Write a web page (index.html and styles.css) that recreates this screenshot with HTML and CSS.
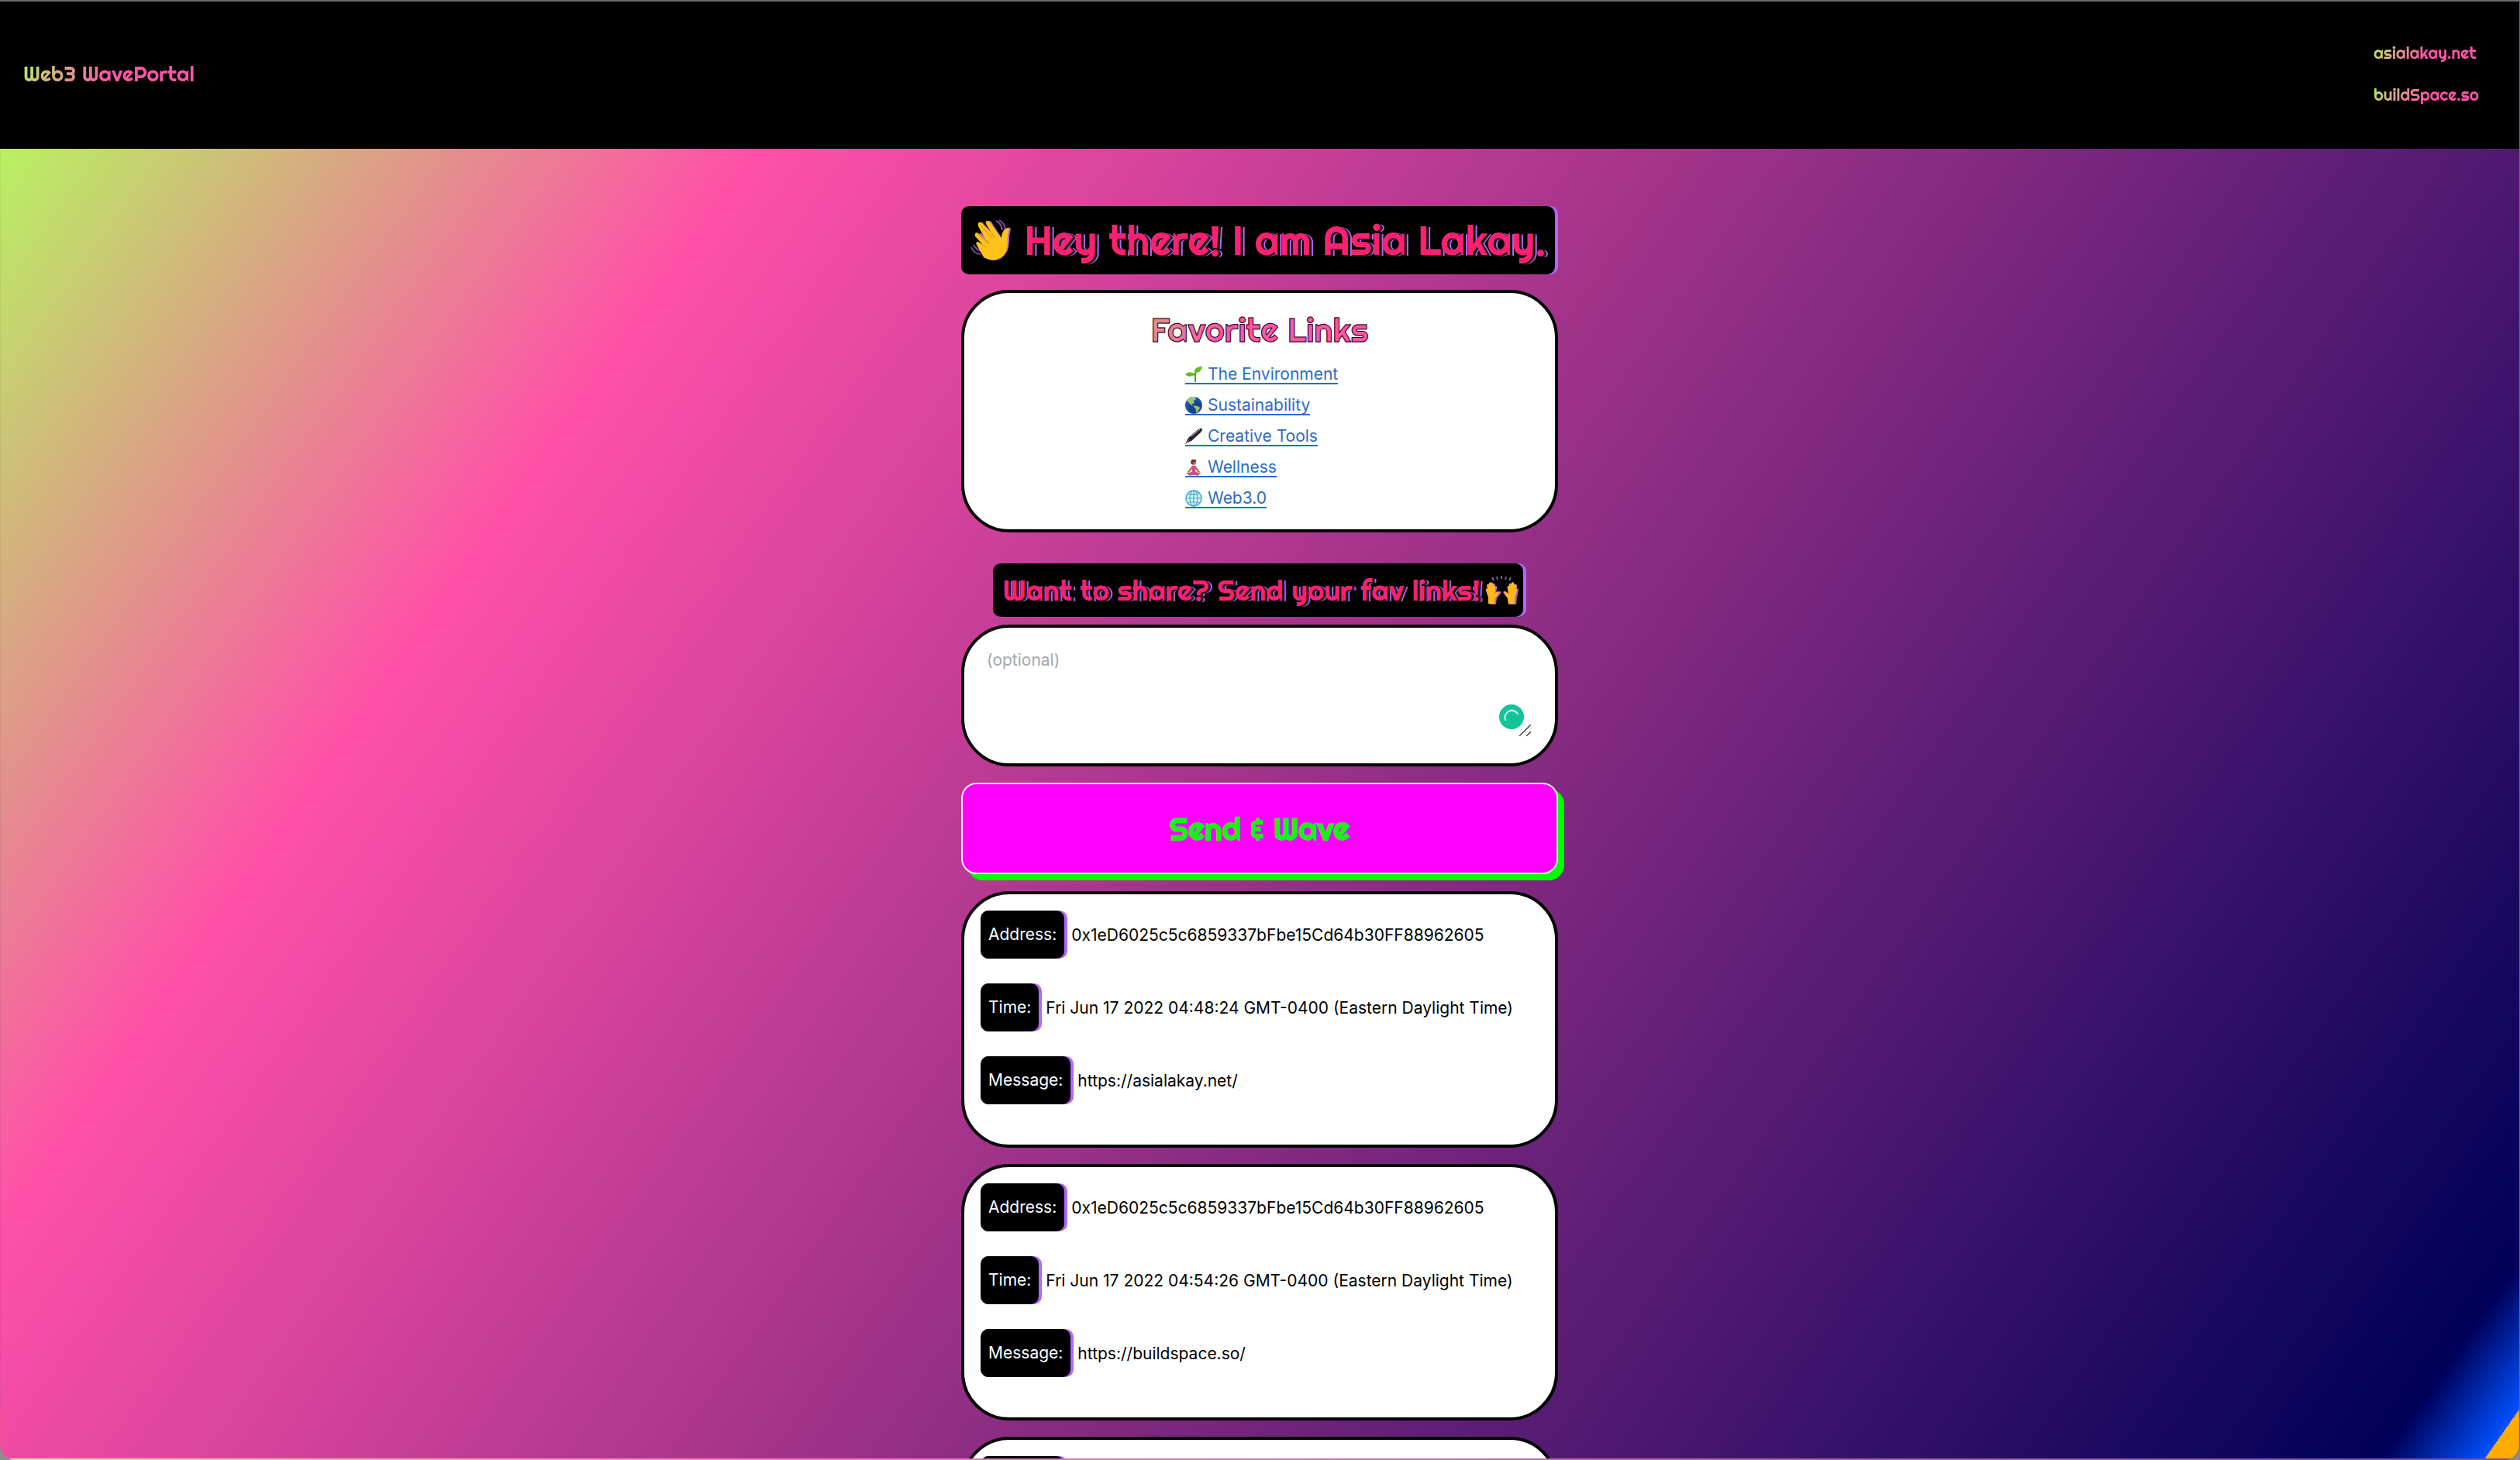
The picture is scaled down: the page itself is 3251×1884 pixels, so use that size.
FILE: index.html
```html
<!DOCTYPE html>
<html lang="en">
<head>
<meta charset="utf-8">
<title>Web3 WavePortal</title>
<link rel="stylesheet" href="styles.css">
</head>
<body>
<div class="window">
  <header class="topbar">
    <a class="brand gradient-text" href="#">Web3 WavePortal</a>
    <nav class="nav">
      <a class="gradient-text" href="#">asialakay.net</a>
      <a class="gradient-text" href="#">buildSpace.so</a>
    </nav>
  </header>
  <main class="main">
    <div class="column">
      <h1 class="banner banner-big">
        <svg class="wave" viewBox="0 0 54 54" aria-hidden="true">
          <g fill="none" stroke="#7b4a9c" stroke-width="2"><path d="M33 2q7 3 8 12M37 1q7 4 8 12M1 36q3 8 12 9M4 33q3 6 10 8"/></g>
          <path transform="translate(2 0)" fill="#b45ce0" d="M12 18l12 12L10 9q-2-4 1-5t4 2l13 13-8-13q-1-4 2-4t4 3l13 20q0-10 5-13t6 0q-2 7-2 16 0 15-10 22t-21-2L8 34q-2-4 2-4l8 5L7 24q-2-5 1-5z"/>
          <path fill="#ffc21a" d="M9 17l11 10L10 9q-1-4 1-5t4 1l13 14-8-13q-1-4 2-4t4 3l14 20q0-9 5-13 4-2 5 1-3 7-2 17 0 14-10 20t-21-1L8 33q-2-4 2-4l8 6L6 22q-1-5 3-5z"/>
          <path fill="none" stroke="#e08a00" stroke-width="1" d="M20 27l4 3M28 19l4 5M14 9l15 16M9 18l15 14M18 35l3 1"/>
        </svg>
        <span>Hey there! I am Asia Lakay.</span>
      </h1>

      <section class="card favorites">
        <h2 class="favorites-title gradient-text">Favorite Links</h2>
        <ul class="links">
          <li><a href="#"><svg viewBox="0 0 22 22" aria-hidden="true"><path fill="none" stroke="#4f9d1c" stroke-width="2" d="M13 21V11q0-3 3-5M13 13q-1-3-6-3"/><path fill="#5fbf22" d="M22 1q-11 0-10 8 8 1 10-8zM0 11q4 5 12 1Q7 5 0 11z"/></svg>The Environment</a></li>
          <li><a href="#"><svg viewBox="0 0 22 22" aria-hidden="true"><circle cx="11" cy="11" r="11" fill="#1b55a8"/><circle cx="12" cy="13" r="8" fill="#174391"/><path fill="#9cc46a" d="M2 5q4-5 10-4l2 2-3 2 1 3-4 2 3 2-3-1-4-4zM12 11l6 2q2 2 0 3l-3 5q-2-2-1-5l-3-3z"/><path fill="#cfe6f5" d="M7 1q5-1 8 0l-4 1z"/></svg>Sustainability</a></li>
          <li><a href="#"><svg viewBox="0 0 22 22" aria-hidden="true"><path fill="#22242a" d="M0 21l4-8L17 2q3-2 5-1 0 3-2 5L8 17q-4 1-8 4z"/><path stroke="#b9bcc4" stroke-width="1" d="M8 11L19 2"/><path stroke="#888" d="M0 21l6-6"/></svg>Creative Tools</a></li>
          <li><a href="#"><svg viewBox="0 0 22 22" aria-hidden="true"><circle cx="11" cy="5" r="3" fill="#b5704f"/><path fill="#6b3a20" d="M7 5q0-5 5-4 3 0 2 3-4-1-4 3-2 1-3-2z"/><path fill="#b5704f" d="M8 10l-5 7 2 1 4-5zM14 10l5 7-2 1-4-5z"/><path fill="#d6459a" d="M8 9h6l-1 7 5 3-1 2H5l-1-2 5-3z"/><path fill="#b5704f" d="M1 18h5l5 2-5 2zM21 18h-5l-5 2 5 2z"/></svg>Wellness</a></li>
          <li><a href="#"><svg viewBox="0 0 22 22" aria-hidden="true"><circle cx="11" cy="11" r="10" fill="#dcf4f8" stroke="#45aecb" stroke-width="1.500"/><g fill="none" stroke="#45aecb" stroke-width="1.200"><ellipse cx="11" cy="11" rx="5" ry="10"/><path d="M11 1v20M1 11h20M3 5q8 3 16 0M3 17q8-3 16 0"/></g></svg>Web3.0</a></li>
        </ul>
      </section>

      <label class="banner banner-small" for="message">
        <span>Want to share? Send your fav links!</span>
        <svg class="hands" viewBox="0 0 42 38" aria-hidden="true">
          <path stroke="#7b5a9c" stroke-width="2" d="M8 2l2 4M14 1l1 4M20 0v4M26 1l-1 4M32 2l-2 4"/>
          <path fill="#b45ce0" d="M5 37l-1-9-3-9q0-4 2-2l-1-5q2-3 3 0l1-3q2-2 3 1l1 0q2-1 2 3l1 0q2 0 1 4l-1 6 5-3q3 0 1 3l-5 6-1 8zM39 37l1-9 2-9q0-4-2-2l0-5q-2-3-3 0l-1-3q-2-2-3 1l-1 0q-2-1-2 3l-1 0q-2 0-1 4l1 6-5-3q-3 0-1 3l5 6 1 8z"/>
          <path fill="#ffb81c" d="M3 36l0-8-3-9q0-4 2-2l-1-5q2-3 3 0l0-3q2-2 3 1l1 0q2-1 2 3l1 0q2 0 1 4l-1 6 4-3q3 0 1 3l-4 6-1 7zM37 36l0-8 3-9q0-4-2-2l1-5q-2-3-3 0l0-3q-2-2-3 1l-1 0q-2-1-2 3l-1 0q-2 0-1 4l1 6-4-3q-3 0-1 3l4 6 1 7z"/>
        </svg>
      </label>

      <div class="card composer">
        <textarea id="message" placeholder="(optional)"></textarea>
        <svg class="status" viewBox="0 0 32 32" aria-hidden="true"><circle cx="16" cy="16" r="16" fill="#15c39a"/><path fill="none" stroke="#d4f7ec" stroke-width="2" stroke-linecap="round" d="M8 20a9 9 0 0 1 16-8"/></svg>
        <svg class="grip" viewBox="0 0 15 15" aria-hidden="true"><path stroke="#333" stroke-width="1.300" d="M0 15L15 0M9 15l6-6"/></svg>
      </div>

      <button class="send" type="button">Send &amp; Wave</button>

      <article class="card wave-card">
        <p><span class="tag">Address:</span>0x1eD6025c5c6859337bFbe15Cd64b30FF88962605</p>
        <p><span class="tag">Time:</span>Fri Jun 17 2022 04:48:24 GMT-0400 (Eastern Daylight Time)</p>
        <p><span class="tag">Message:</span>https://asialakay.net/</p>
      </article>
      <article class="card wave-card">
        <p><span class="tag">Address:</span>0x1eD6025c5c6859337bFbe15Cd64b30FF88962605</p>
        <p><span class="tag">Time:</span>Fri Jun 17 2022 04:54:26 GMT-0400 (Eastern Daylight Time)</p>
        <p><span class="tag">Message:</span>https://buildspace.so/</p>
      </article>
      <article class="card wave-card">
        <p><span class="tag">Address:</span></p>
      </article>
    </div>
  </main>
</div>
</body>
</html>
```
FILE: styles.css
```css
:root {
  --display: Righteous, Lato, sans-serif;
  --body: Inter, "Liberation Sans", sans-serif;
  --purple: #b068f8;
}

* {
  box-sizing: border-box;
}

body {
  margin: 0;
  background: #8c8c8c;
  font-family: var(--body);
  font-size: 21px;
  color: #000;
}

h1, h2, p, ul {
  margin: 0;
  padding: 0;
  font-weight: 400;
}

a {
  text-decoration: none;
}

.window {
  display: flex;
  flex-direction: column;
  height: 100vh;
  overflow: hidden;
  border-top: 2px solid #67686b;
  border-right: 1px solid #67686b;
  border-radius: 0 0 20px 20px;
}

.gradient-text {
  background: linear-gradient(125deg, #b4f461 0%, #ff55a8 50%);
  background-clip: text;
  -webkit-background-clip: text;
  color: transparent;
  font-family: var(--display);
}

.topbar {
  display: flex;
  flex: none;
  align-items: center;
  justify-content: space-between;
  min-height: 190px;
  padding: 0 52px 4px 30px;
  background: #000;
}

.brand {
  font-size: 27px;
}

.nav {
  display: flex;
  flex-direction: column;
  gap: 26px;
  font-size: 21px;
  line-height: 28px;
}

.main {
  flex: 1;
  overflow: hidden auto;
  scrollbar-width: none;
  padding: 74px 20px;
  background: linear-gradient(125deg, #b8f162 0%, #ff50a8 22%, #000058 96%, #0050ff 99%, #ffab00 99%);
  border-bottom: 2px solid rgba(255, 255, 255, .25);
}

.column {
  display: flex;
  flex-direction: column;
  max-width: 770px;
  margin: 0 auto;
}

.banner {
  display: flex;
  align-items: center;
  justify-content: center;
  background: #000;
  border-radius: 10px;
  box-shadow: 4px 0 0 var(--purple);
  color: #fb2070;
  font-family: var(--display);
  white-space: nowrap;
  text-shadow: 3px 1px 0 #000, 5px 1px 0 var(--purple);
}

.banner-big {
  gap: 16px;
  height: 88px;
  margin: 0 4px 20px 0;
  font-size: 53px;
}

.wave {
  width: 54px;
  height: 54px;
}

.card {
  background: #fff;
  border: 4px solid #000;
  border-radius: 62px;
}

.favorites {
  display: flex;
  flex-direction: column;
  align-items: center;
  height: 313px;
  margin-bottom: 40px;
  padding: 18px;
}

.favorites-title {
  margin-bottom: 8px;
  font-size: 43px;
  line-height: 60px;
  background-image: linear-gradient(125deg, #d99a8c 0%, #ff55a8 35%);
  -webkit-text-stroke: 1px #200010;
}

.links {
  width: 192px;
  list-style: none;
}

.links li {
  display: flex;
  align-items: center;
  height: 40px;
}

.links a {
  display: inline-flex;
  gap: 7px;
  color: #2b6cc4;
  line-height: 22px;
  white-space: nowrap;
  border-bottom: 2px solid #2b6cc4;
}

.links svg {
  width: 22px;
  height: 22px;
}

.banner-small {
  align-self: center;
  gap: 8px;
  height: 69px;
  margin: 0 4px 10px 0;
  padding: 0 6px 0 13px;
  font-size: 37px;
}

.hands {
  width: 42px;
  height: 38px;
}

.composer {
  position: relative;
  height: 183px;
  margin-bottom: 21px;
  padding: 25px 29px 34px;
}

.composer textarea {
  display: block;
  width: 100%;
  height: 100%;
  padding: 0;
  border: 0;
  outline: 0;
  resize: none;
  background: none;
  font: inherit;
  line-height: 34px;
}

.composer textarea::placeholder {
  color: #a3a7ad;
}

.status,
.grip {
  position: absolute;
}

.status {
  right: 40px;
  bottom: 44px;
  width: 32px;
  height: 32px;
}

.grip {
  right: 31px;
  bottom: 35px;
  width: 15px;
  height: 15px;
}

.send {
  height: 118px;
  margin-bottom: 22px;
  border: 2px solid #ffe6ff;
  border-radius: 20px;
  background: #f0f;
  box-shadow: 8px 8px 0 #0f0;
  color: #1cf01c;
  font-family: var(--display);
  font-size: 40px;
  font-weight: 900;
}

.wave-card {
  display: flex;
  flex-direction: column;
  gap: 32px;
  margin-bottom: 21px;
  padding: 21px 21px 52px;
}

.wave-card p {
  display: flex;
  align-items: center;
  gap: 9px;
  white-space: nowrap;
}

.tag {
  padding: 0 10px;
  background: #000;
  border-radius: 10px;
  box-shadow: 4px 0 0 var(--purple);
  color: #fff;
  line-height: 62px;
}
```
